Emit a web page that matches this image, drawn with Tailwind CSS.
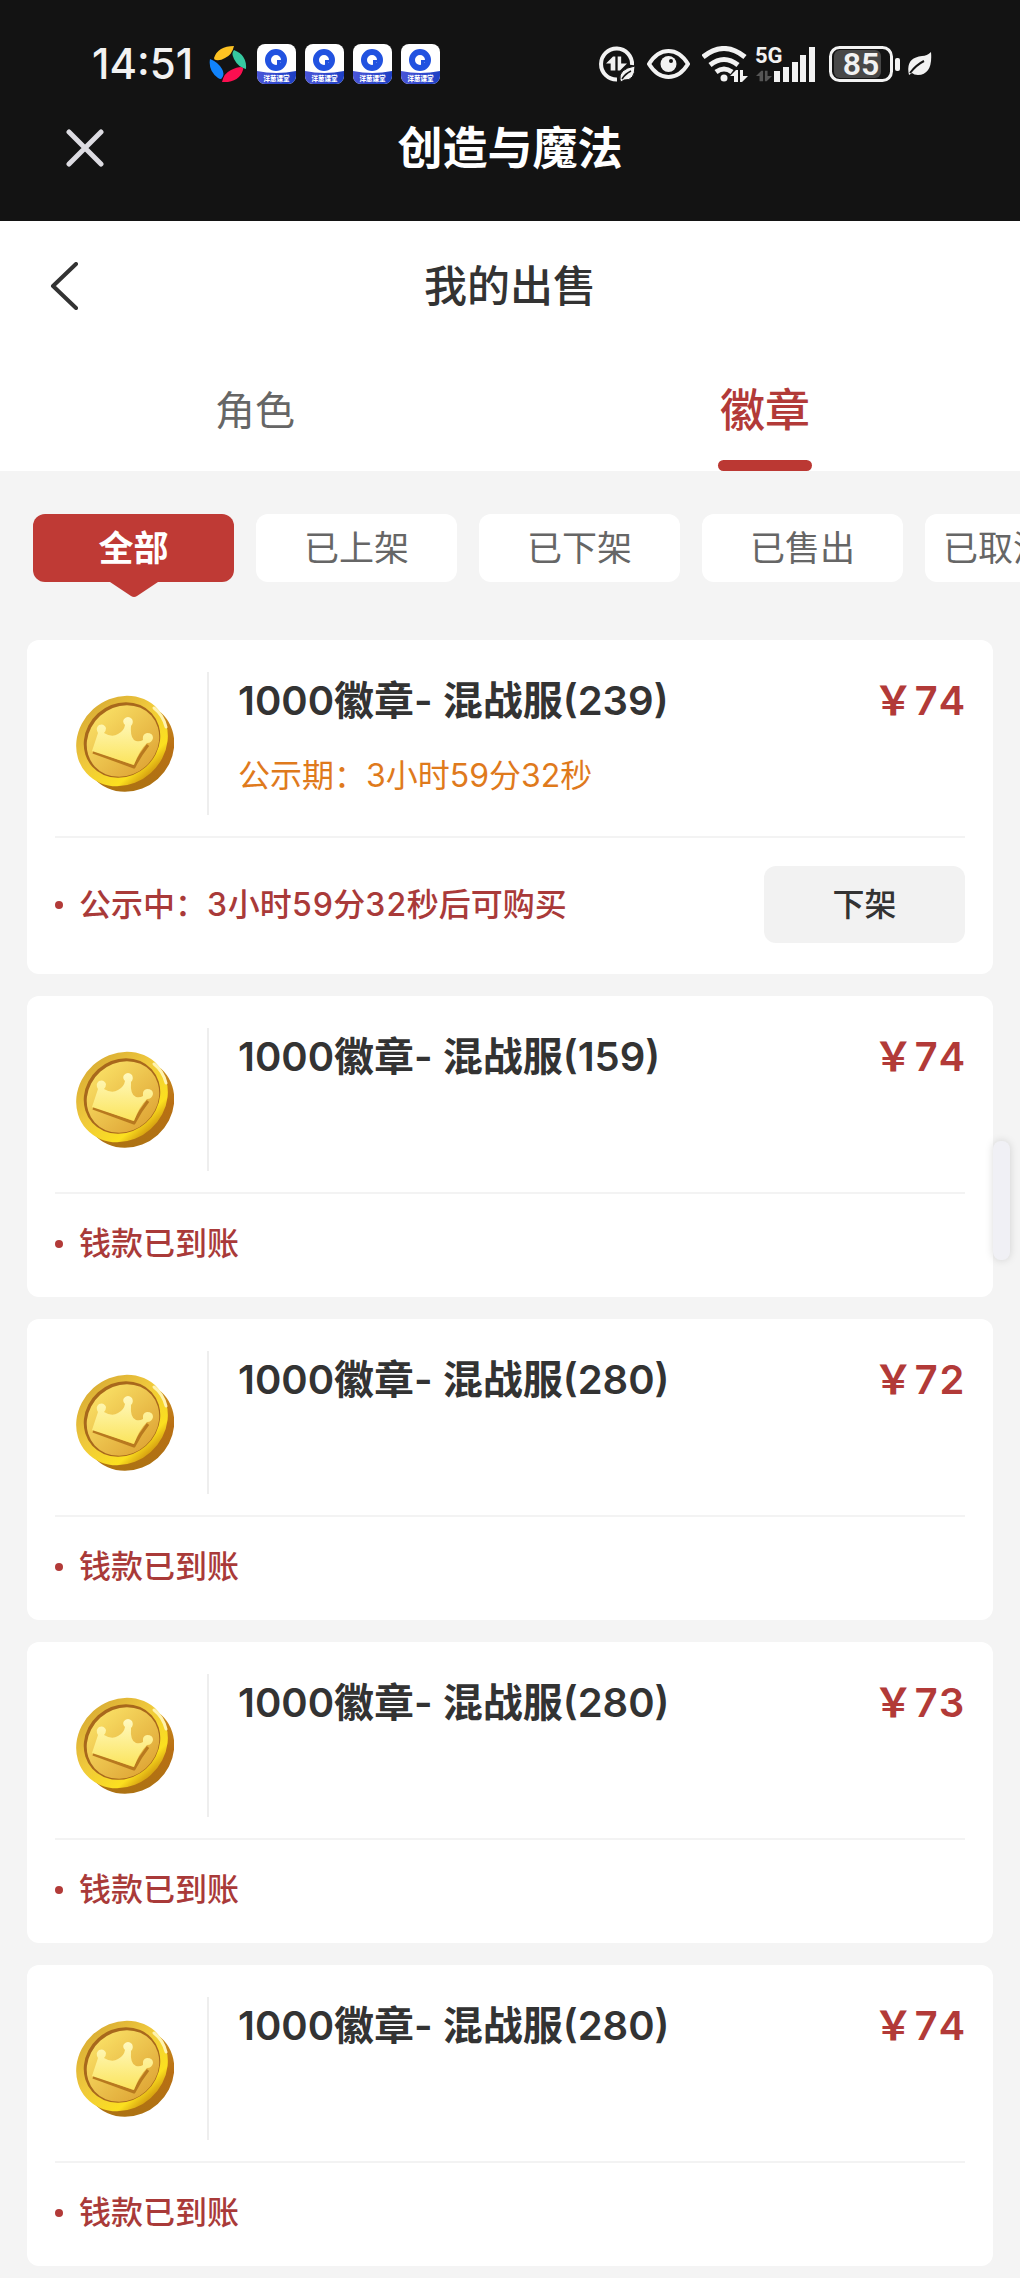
<!DOCTYPE html>
<html lang="zh-CN">
<head>
    <meta charset="UTF-8">
    <meta name="viewport" content="width=device-width, initial-scale=1.0">
    <title>我的出售</title>
    <script src="https://cdn.jsdelivr.net/npm/@tailwindcss/browser@4"></script>
</head>
<body class="min-h-screen bg-[#f4f4f4] font-['Inter','Noto_Sans_CJK_SC',sans-serif] text-[#333333] overflow-x-hidden">

    <!-- Shared drawings -->
    <svg class="absolute w-0 h-0" aria-hidden="true">
        <defs>
            <linearGradient id="coin-rim" x1="0" y1="0" x2="0" y2="1">
                <stop offset="0" stop-color="#dcb035"/>
                <stop offset="0.4" stop-color="#efc83c"/>
                <stop offset="0.85" stop-color="#fbe01f"/>
                <stop offset="1" stop-color="#d6a010"/>
            </linearGradient>
            <linearGradient id="coin-side" x1="0" y1="1" x2="1" y2="0">
                <stop offset="0" stop-color="#a87412"/>
                <stop offset="0.5" stop-color="#b96f14"/>
                <stop offset="0.75" stop-color="#c98a1c"/>
                <stop offset="1" stop-color="#e3c24a"/>
            </linearGradient>
            <linearGradient id="coin-face" x1="0" y1="0" x2="0" y2="1">
                <stop offset="0" stop-color="#f8dc62"/>
                <stop offset="1" stop-color="#e0a838"/>
            </linearGradient>
            <linearGradient id="coin-crown" x1="0" y1="0" x2="0" y2="1">
                <stop offset="0" stop-color="#fff9c0"/>
                <stop offset="1" stop-color="#fbe45c"/>
            </linearGradient>
            <linearGradient id="app-band" x1="0" y1="0" x2="1" y2="0">
                <stop offset="0" stop-color="#4a55d8"/>
                <stop offset="1" stop-color="#1d3fc4"/>
            </linearGradient>
            <clipPath id="app-clip"><rect width="39" height="40" rx="8"/></clipPath>
        </defs>
        <symbol id="coin" viewBox="0 0 98 98">
            <ellipse cx="53" cy="52" rx="47" ry="43" transform="rotate(-42 53 52)" fill="url(#coin-side)"/>
            <ellipse cx="46" cy="46" rx="48" ry="43" transform="rotate(-42 46 46)" fill="url(#coin-rim)"/>
            <path d="M78 13 Q87 20 90 32" fill="none" stroke="#fff3b0" stroke-width="3" stroke-linecap="round"/>
            <ellipse cx="46" cy="45" rx="40" ry="36" transform="rotate(-42 46 45)" fill="#a8681c"/>
            <ellipse cx="47" cy="46" rx="38" ry="34" transform="rotate(-42 47 46)" fill="url(#coin-face)"/>
            <path d="M17 57 L58 72 Q64 60 72 50" fill="none" stroke="#b8791f" stroke-width="3" stroke-linejoin="round"/>
            <path d="M16 56 L22 38 Q19 33 23 30 Q28 28 30 33 Q30 36 28 38 Q36 43 42 39 Q48 36 49 30 Q46 27 48 24 Q52 20 56 24 Q58 28 55 31 Q54 44 60 46 Q64 47 67 45 Q66 39 71 38 Q77 38 77 43 Q76 48 71 48 Q63 56 58 70 Z" fill="url(#coin-crown)"/>
        </symbol>
        <symbol id="app" viewBox="0 0 39 40">
            <g clip-path="url(#app-clip)">
                <rect width="39" height="40" fill="#ffffff"/>
                <path d="M0 27 Q19 31 39 27 V40 H0 Z" fill="url(#app-band)"/>
                <circle cx="19" cy="16" r="8" fill="none" stroke="#2152e0" stroke-width="6"/>
                <path d="M20 16 h5 v2 h-2 v3 h-3 Z" fill="#2152e0"/>
                <text x="19.500" y="37" text-anchor="middle" font-size="6.500" font-weight="900" fill="#ffffff">洋葱课堂</text>
            </g>
        </symbol>
        <symbol id="updown" viewBox="0 0 18 12">
            <path d="M0 6 L6 0 H8 V12 H4 V6 Z M10 0 H13 V6 H18 L12 12 H10 Z" fill="currentColor"/>
        </symbol>
    </svg>

    <!-- Top bar -->
    <header class="bg-[#131313] pt-10 h-[221px]">
        <div class="flex items-center justify-between h-12 pl-[92px] pr-[88px] text-[#f2f2f2]">
            <div class="flex items-center">
                <span class="w-[117px] text-[42px] leading-12 font-medium">14:51</span>
                <svg class="w-[38px] h-[38px] mr-2.5" viewBox="0 0 38 38">
                    <path d="M5 13 Q9 1 25 1 Q23 10 16 13 Q11 16 7 15 Q5 15 5 13 Z" fill="#fdc222"/>
                    <path d="M25 5 Q38 10 37 24 Q29 22 25 14 Q22 8 25 5 Z" fill="#36c9a0"/>
                    <path d="M34 25 Q30 38 13 37 Q15 28 22 25 Q28 22 32 22 Q35 23 34 25 Z" fill="#fb0f50"/>
                    <path d="M1 14 Q9 17 13 24 Q16 29 13 33 Q12 35 9 33 Q-1 26 1 14 Z" fill="#1183fb"/>
                </svg>
                <div class="flex gap-[9px]">
                    <svg class="w-[39px] h-10"><use href="#app"/></svg>
                    <svg class="w-[39px] h-10"><use href="#app"/></svg>
                    <svg class="w-[39px] h-10"><use href="#app"/></svg>
                    <svg class="w-[39px] h-10"><use href="#app"/></svg>
                </div>
            </div>
            <div class="flex items-center">
                <!-- Data saver -->
                <svg class="w-9 h-9 mr-3" viewBox="0 0 36 36">
                    <path d="M33 19 A15.500 15.500 0 1 0 18 33.500" fill="none" stroke="currentColor" stroke-width="4"/>
                    <use href="#updown" x="7" y="10" width="21" height="15"/>
                    <path d="M36 20 Q36 35 25 34 L22 36 L21 34 Q19 23 36 20 Z" fill="currentColor" stroke="#131313" stroke-width="1"/>
                    <path d="M23 33 Q26 28 32 25" fill="none" stroke="#131313" stroke-width="1.500"/>
                </svg>
                <!-- Eye -->
                <svg class="w-[43px] h-[30px] mr-3" viewBox="0 0 43 30">
                    <path d="M2 15 Q10 2 21.500 2 Q33 2 41 15 Q33 28 21.500 28 Q10 28 2 15 Z" fill="none" stroke="currentColor" stroke-width="4"/>
                    <circle cx="21.500" cy="15" r="8" fill="currentColor"/>
                    <circle cx="24" cy="12" r="2" fill="#131313"/>
                </svg>
                <!-- Wifi -->
                <svg class="w-[46px] h-9 mr-2" viewBox="0 0 46 36">
                    <g fill="none" stroke="currentColor" stroke-width="5">
                        <path d="M1 11 Q22 -6 43 11"/>
                        <path d="M8 19 Q22 8 36 19"/>
                        <path d="M14 26 Q22 20 30 26"/>
                    </g>
                    <circle cx="22" cy="32" r="3.500" fill="currentColor"/>
                    <use href="#updown" x="28" y="24" width="18" height="12"/>
                </svg>
                <!-- Signal -->
                <svg class="w-[59px] h-9 mr-3.5 overflow-visible" viewBox="0 0 59 36">
                    <text x="-1" y="17" font-size="22" font-weight="700" font-family="Roboto, sans-serif" fill="currentColor">5G</text>
                    <use href="#updown" x="0" y="24" width="16" height="12" color="#555555"/>
                    <path d="M18 25 h6 v11 h-6 Z M27 21 h6 v15 h-6 Z M36 16 h6 v20 h-6 Z M44 9 h6 v27 h-6 Z M53 1 h6 v35 h-6 Z" fill="currentColor"/>
                </svg>
                <!-- Battery -->
                <svg class="w-[71px] h-9 mr-2" viewBox="0 0 71 36">
                    <rect x="5" y="4" width="47" height="28" rx="6" fill="#484848"/>
                    <rect x="1.500" y="1.500" width="61" height="33" rx="9" fill="none" stroke="currentColor" stroke-width="3"/>
                    <rect x="66" y="12" width="5" height="13" rx="2" fill="currentColor"/>
                    <text x="32" y="29" text-anchor="middle" font-size="32" font-weight="600" font-family="Roboto, sans-serif" fill="currentColor">85</text>
                </svg>
                <svg class="w-6 h-6" viewBox="0 0 24 24">
                    <path d="M23 0 Q25 22 10 23 Q6 23 4 21 L1 23 Q-3 6 14 4 Q19 4 23 0 Z" fill="currentColor"/>
                    <path d="M2 21 Q8 13 16 9" fill="none" stroke="#131313" stroke-width="2"/>
                </svg>
            </div>
        </div>
        <div class="grid grid-cols-[1fr_auto_1fr] items-center h-[122px] px-16">
            <button type="button" aria-label="关闭" class="w-10 h-10">
                <svg class="w-10 h-10" viewBox="0 0 40 40" fill="none" stroke="#dddce2" stroke-width="5" stroke-linecap="round">
                    <path d="M5 3 L37 35 M37 3 L5 35"/>
                </svg>
            </button>
            <h1 class="text-[45px] font-bold text-white">创造与魔法</h1>
        </div>
    </header>

    <!-- Page heading and tabs -->
    <section class="bg-white">
        <div class="grid grid-cols-[1fr_auto_1fr] items-center h-[130px] px-12">
            <button type="button" aria-label="返回" class="w-8 h-12">
                <svg class="w-8 h-12" viewBox="0 0 32 48" fill="none" stroke="#333333" stroke-width="4" stroke-linecap="round" stroke-linejoin="round">
                    <path d="M28 2 L5 24 L28 46"/>
                </svg>
            </button>
            <h2 class="text-[43px] font-medium">我的出售</h2>
        </div>
        <nav class="grid grid-cols-2 h-[120px] text-center">
            <a href="#" class="flex items-center justify-center text-[40px] text-[#666666]">角色</a>
            <a href="#" class="relative flex items-center justify-center text-[45px] font-medium text-[#b23a38]">
                徽章
                <span class="absolute bottom-0 w-[94px] h-[11px] rounded-full bg-[#bb3833]"></span>
            </a>
        </nav>
    </section>

    <!-- Status filter -->
    <div class="flex gap-[22px] pl-[33px] pt-[43px] overflow-hidden text-[35px] text-[#666666]">
        <div class="shrink-0 pb-[15px]">
            <button type="button" class="w-[201px] h-[68px] rounded-xl bg-[#bf3a35] font-bold text-white">全部</button>
            <svg class="mx-auto w-12 h-[15px] -mb-[15px]" viewBox="0 0 48 15"><path d="M0 0 H48 L27 14 Q24 16 21 14 Z" fill="#bf3a35"/></svg>
        </div>
        <button type="button" class="shrink-0 w-[201px] h-[68px] rounded-xl bg-white">已上架</button>
        <button type="button" class="shrink-0 w-[201px] h-[68px] rounded-xl bg-white">已下架</button>
        <button type="button" class="shrink-0 w-[201px] h-[68px] rounded-xl bg-white">已售出</button>
        <button type="button" class="shrink-0 w-[201px] h-[68px] rounded-xl bg-white pl-[18px] text-left">已取消</button>
    </div>

    <!-- Listings -->
    <main class="flex flex-col gap-[22px] px-[27px] pt-[43px] pb-3">
        <article class="rounded-xl bg-white px-7 pt-8">
            <div class="flex h-[143px] mb-[21px]">
                <div class="flex items-center justify-center w-[140px] mr-3">
                    <svg class="w-[98px] h-[98px]"><use href="#coin"/></svg>
                </div>
                <div class="flex-1 border-l-2 border-[#eeeeee] pl-[29px]">
                    <div class="flex justify-between text-[40px] leading-[58px] font-semibold">
                        <h3>1000徽章- 混战服(239)</h3>
                        <span class="tabular-nums text-[#b23a38]">￥74</span>
                    </div>
                    <p class="mt-6 text-[32px] leading-11 text-[#df7a1c]">公示期：3小时59分32秒</p>
                </div>
            </div>
            <div class="flex items-center justify-between border-t-2 border-[#f3f3f3] pt-7 pb-[31px]">
                <p class="flex items-center gap-4 text-[32px] leading-11 font-medium tabular-nums text-[#a93a39]"><span class="w-2 h-2 rounded-full bg-[#b23a38]"></span>公示中：3小时59分32秒后可购买</p>
                <button type="button" class="w-[201px] h-[77px] rounded-xl bg-[#f2f2f2] text-[32px] font-medium">下架</button>
            </div>
        </article>

        <article class="rounded-xl bg-white px-7 pt-8">
            <div class="flex h-[143px] mb-[21px]">
                <div class="flex items-center justify-center w-[140px] mr-3">
                    <svg class="w-[98px] h-[98px]"><use href="#coin"/></svg>
                </div>
                <div class="flex-1 border-l-2 border-[#eeeeee] pl-[29px]">
                    <div class="flex justify-between text-[40px] leading-[58px] font-semibold">
                        <h3>1000徽章- 混战服(159)</h3>
                        <span class="tabular-nums text-[#b23a38]">￥74</span>
                    </div>
                </div>
            </div>
            <div class="border-t-2 border-[#f3f3f3] pt-7 pb-[31px]">
                <p class="flex items-center gap-4 text-[32px] leading-11 font-medium text-[#a93a39]"><span class="w-2 h-2 rounded-full bg-[#b23a38]"></span>钱款已到账</p>
            </div>
        </article>

        <article class="rounded-xl bg-white px-7 pt-8">
            <div class="flex h-[143px] mb-[21px]">
                <div class="flex items-center justify-center w-[140px] mr-3">
                    <svg class="w-[98px] h-[98px]"><use href="#coin"/></svg>
                </div>
                <div class="flex-1 border-l-2 border-[#eeeeee] pl-[29px]">
                    <div class="flex justify-between text-[40px] leading-[58px] font-semibold">
                        <h3>1000徽章- 混战服(280)</h3>
                        <span class="tabular-nums text-[#b23a38]">￥72</span>
                    </div>
                </div>
            </div>
            <div class="border-t-2 border-[#f3f3f3] pt-7 pb-[31px]">
                <p class="flex items-center gap-4 text-[32px] leading-11 font-medium text-[#a93a39]"><span class="w-2 h-2 rounded-full bg-[#b23a38]"></span>钱款已到账</p>
            </div>
        </article>

        <article class="rounded-xl bg-white px-7 pt-8">
            <div class="flex h-[143px] mb-[21px]">
                <div class="flex items-center justify-center w-[140px] mr-3">
                    <svg class="w-[98px] h-[98px]"><use href="#coin"/></svg>
                </div>
                <div class="flex-1 border-l-2 border-[#eeeeee] pl-[29px]">
                    <div class="flex justify-between text-[40px] leading-[58px] font-semibold">
                        <h3>1000徽章- 混战服(280)</h3>
                        <span class="tabular-nums text-[#b23a38]">￥73</span>
                    </div>
                </div>
            </div>
            <div class="border-t-2 border-[#f3f3f3] pt-7 pb-[31px]">
                <p class="flex items-center gap-4 text-[32px] leading-11 font-medium text-[#a93a39]"><span class="w-2 h-2 rounded-full bg-[#b23a38]"></span>钱款已到账</p>
            </div>
        </article>

        <article class="rounded-xl bg-white px-7 pt-8">
            <div class="flex h-[143px] mb-[21px]">
                <div class="flex items-center justify-center w-[140px] mr-3">
                    <svg class="w-[98px] h-[98px]"><use href="#coin"/></svg>
                </div>
                <div class="flex-1 border-l-2 border-[#eeeeee] pl-[29px]">
                    <div class="flex justify-between text-[40px] leading-[58px] font-semibold">
                        <h3>1000徽章- 混战服(280)</h3>
                        <span class="tabular-nums text-[#b23a38]">￥74</span>
                    </div>
                </div>
            </div>
            <div class="border-t-2 border-[#f3f3f3] pt-7 pb-[31px]">
                <p class="flex items-center gap-4 text-[32px] leading-11 font-medium text-[#a93a39]"><span class="w-2 h-2 rounded-full bg-[#b23a38]"></span>钱款已到账</p>
            </div>
        </article>
    </main>

    <!-- Edge handle floating over the page -->
    <div class="fixed right-[10px] top-[1141px] w-[17px] h-[119px] rounded-lg bg-[#f0f0f5] shadow-[0_0_8px_rgba(0,0,0,0.15)]"></div>
</body>
</html>
